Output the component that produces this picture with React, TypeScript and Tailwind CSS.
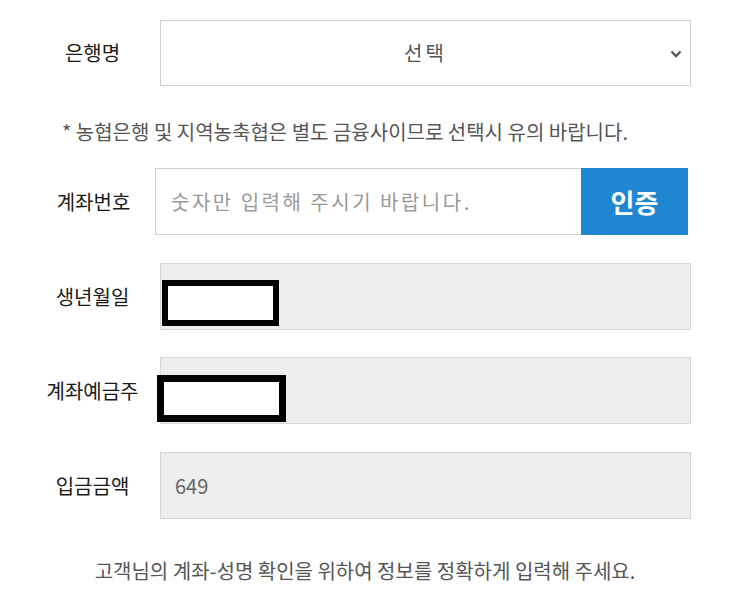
import React from 'react';

const font = { fontFamily: '"Noto Sans CJK KR", "Noto Sans", sans-serif' };

function Label({ children }: { children: React.ReactNode }) {
  return (
    <div className="ml-[25px] w-[135px] shrink-0 text-center text-[20px] text-[#1a1a1a]">
      {children}
    </div>
  );
}

function Redact({ className }: { className: string }) {
  return <div className={'absolute bg-white border-black ' + className} />;
}

export default function App() {
  return (
    <div className="w-[742px] h-[596px] bg-white overflow-hidden" style={font}>
      <div className="flex items-center pt-[20px]">
        <Label>은행명</Label>
        <div className="relative flex h-[66px] w-[531px] items-center justify-center border border-[#cfcfcf] bg-white text-[20px] tracking-[3px] text-[#555]">
          선택
          <svg
            className="absolute right-[8px] top-[29px]"
            width="12"
            height="8"
            viewBox="0 0 12 8"
            fill="none"
          >
            <path d="M1.5 1.5 L6 6 L10.5 1.5" stroke="#555" strokeWidth="2.4" />
          </svg>
        </div>
      </div>

      <p className="mt-[32px] ml-[62px] text-[20px] leading-[28px] text-[#555]">
        * 농협은행 및 지역농축협은 별도 금융사이므로 선택시 유의 바랍니다.
      </p>

      <div className="mt-[22px] flex items-center">
        <div className="ml-[26px] w-[129px] shrink-0 pl-[6px] text-center text-[20px] text-[#1a1a1a]">
          계좌번호
        </div>
        <div className="flex h-[67px] w-[426px] items-center border border-r-0 border-[#cfcfcf] pl-[15px] text-[20px] tracking-[2.5px] text-[#999]">
          숫자만 입력해 주시기 바랍니다.
        </div>
        <button className="flex h-[67px] w-[107px] items-center justify-center bg-[#1f87d0] text-[26px] font-bold text-white">
          인증
        </button>
      </div>

      <div className="mt-[28px] flex items-center">
        <Label>생년월일</Label>
        <div className="relative h-[67px] w-[531px] border border-[#d6d6d6] bg-[#eeeeee]">
          <Redact className="left-[1px] top-[16px] h-[46px] w-[117px] border-[6px]" />
        </div>
      </div>

      <div className="mt-[27px] flex items-center">
        <Label>계좌예금주</Label>
        <div className="relative h-[67px] w-[531px] border border-[#d6d6d6] bg-[#eeeeee]">
          <Redact className="left-[-4px] top-[17px] h-[47px] w-[129px] border-[7px]" />
        </div>
      </div>

      <div className="mt-[28px] flex items-center">
        <Label>입금금액</Label>
        <div className="flex h-[67px] w-[531px] items-center border border-[#d6d6d6] bg-[#eeeeee] pl-[14px] text-[20px] text-[#666]">
          649
        </div>
      </div>

      <p className="mt-[37px] text-center pr-[12px] text-[20px] text-[#555]">
        고객님의 계좌-성명 확인을 위하여 정보를 정확하게 입력해 주세요.
      </p>
    </div>
  );
}
